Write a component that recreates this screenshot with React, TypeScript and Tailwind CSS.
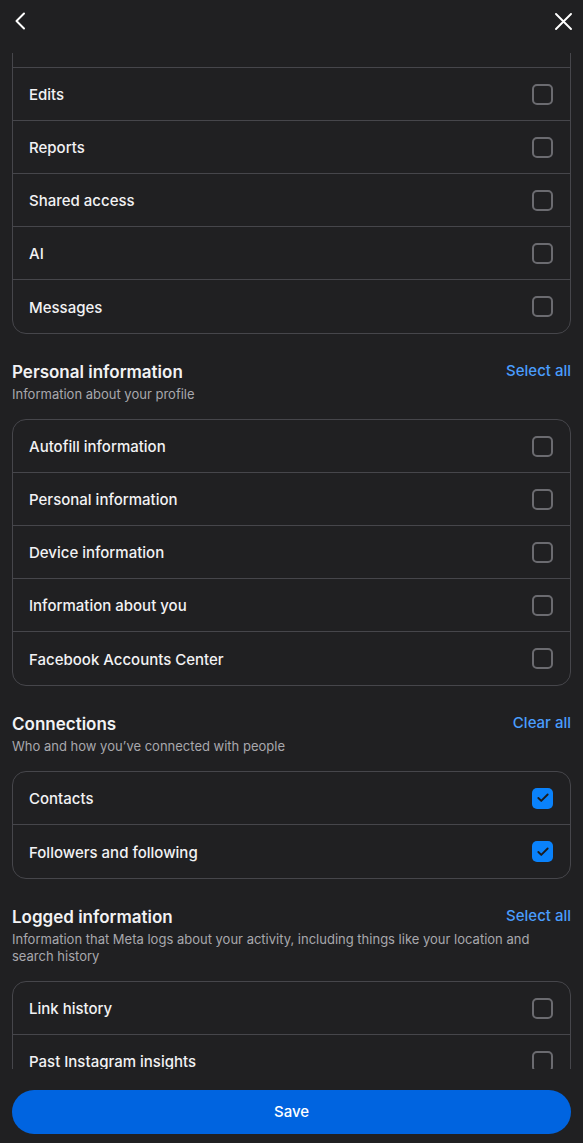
import { Check } from 'lucide-react'

type Section = {
  title?: string
  subtitle?: string
  action?: string
  rows: { label: string; checked?: boolean }[]
}

const SECTIONS: Section[] = [
  {
    rows: [
      { label: '' },
      { label: 'Edits' },
      { label: 'Reports' },
      { label: 'Shared access' },
      { label: 'AI' },
      { label: 'Messages' },
    ],
  },
  {
    title: 'Personal information',
    subtitle: 'Information about your profile',
    action: 'Select all',
    rows: [
      { label: 'Autofill information' },
      { label: 'Personal information' },
      { label: 'Device information' },
      { label: 'Information about you' },
      { label: 'Facebook Accounts Center' },
    ],
  },
  {
    title: 'Connections',
    subtitle: 'Who and how you\u2019ve connected with people',
    action: 'Clear all',
    rows: [
      { label: 'Contacts', checked: true },
      { label: 'Followers and following', checked: true },
    ],
  },
  {
    title: 'Logged information',
    subtitle: 'Information that Meta logs about your activity, including things like your location and search history',
    action: 'Select all',
    rows: [
      { label: 'Link history' },
      { label: 'Past Instagram insights' },
      { label: 'Search history' },
    ],
  },
]

function Box({ checked }: { checked?: boolean }) {
  if (checked) {
    return (
      <span className="w-[21px] h-[21px] rounded-[5px] bg-[#0a82fb] flex items-center justify-center">
        <Check size={14} strokeWidth={3.2} className="text-[#1c1c1e]" />
      </span>
    )
  }
  return <span className="w-[21px] h-[21px] rounded-[5px] border-2 border-[#6b6b70]" />
}

export default function App() {
  return (
    <div
      className="h-[1143px] flex flex-col bg-[#202022] text-[#f2f2f4] overflow-hidden"
      style={{ fontFamily: 'Inter, "Noto Sans", sans-serif' }}
    >
      {/* header */}
      <div className="h-[53px] flex-shrink-0 flex items-start justify-between pl-[14px] pr-[11px] pt-[12px]">
        <svg width="12" height="18" viewBox="0 0 12 18" fill="none" stroke="white" strokeWidth="2" strokeLinecap="round" strokeLinejoin="round">
          <path d="M10 1.5 L2.5 9 L10 16.5" />
        </svg>
        <svg width="17" height="17" viewBox="0 0 17 17" fill="none" stroke="white" strokeWidth="1.9" strokeLinecap="round" className="mt-[1px]">
          <path d="M1 1 L16 16 M16 1 L1 16" />
        </svg>
      </div>

      {/* scroll area */}
      <div className="flex-1 overflow-hidden px-3">
        <div className="mt-[-39px]">
          {SECTIONS.map((s, i) => (
            <div key={i} className={i > 0 ? 'pt-[27px]' : ''}>
              {s.title && (
                <div className="mb-[16px]">
                  <div className="flex items-start justify-between">
                    <h2 className="text-[17px] leading-[22px] font-semibold text-[#f2f2f4]">{s.title}</h2>
                    <button className="text-[15px] leading-[20px] font-medium text-[#4a9dfd]">{s.action}</button>
                  </div>
                  <p className="text-[13px] leading-[17px] text-[#a8a8ad] mt-[3px] pr-4">{s.subtitle}</p>
                </div>
              )}
              <div className="border border-[#46464b] rounded-[14px]">
                {s.rows.map((r, j) => (
                  <div
                    key={j}
                    className="h-[53px] flex items-center justify-between pl-[16px] pr-[17px] border-b border-[#46464b] last:border-0"
                  >
                    <span className="text-[15px] font-medium pt-[3px]">{r.label}</span>
                    <Box checked={r.checked} />
                  </div>
                ))}
              </div>
            </div>
          ))}
        </div>
      </div>

      {/* footer */}
      <div className="flex-shrink-0 px-3 pt-[21px] pb-[9px]">
        <button className="w-full h-[44px] rounded-full bg-[#0064e0] text-white text-[15px] font-medium">
          Save
        </button>
      </div>
    </div>
  )
}
